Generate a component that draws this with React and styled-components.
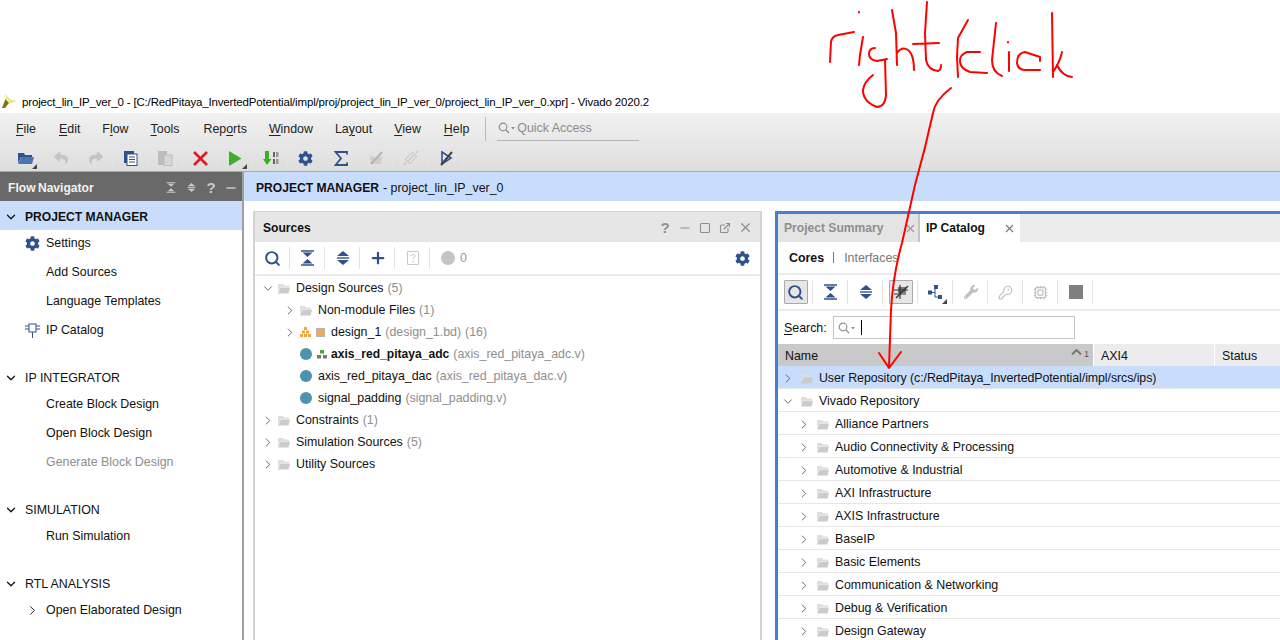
import React from "react";
import styled, { createGlobalStyle } from "styled-components";
import { ChevronRight, ChevronDown, Search, Plus, X, Minus, Square, ExternalLink, KeyRound, Cpu } from "lucide-react";
import { FaCog, FaReply, FaShare, FaWrench } from "react-icons/fa";

const GlobalStyle = createGlobalStyle`
    html, body { margin: 0; padding: 0; background: #fff; }
    body { font-family: "Liberation Sans", Arial, sans-serif; font-size: 12.4px; color: #111; }
    * { box-sizing: border-box; }
    b { font-size: 12.1px; }
`;

const NAVY = "#30528c";

const Page = styled.div`
    position: relative;
    width: 1280px;
    height: 640px;
    overflow: hidden;
    display: flex;
    flex-direction: column;
`;

const BlankTop = styled.div`
    height: 90px;
    flex: none;
`;

const TitleBar = styled.div`
    height: 23px;
    flex: none;
    display: flex;
    align-items: center;
    gap: 5px;
    padding-left: 2px;
    font-size: 11.5px;
    letter-spacing: -0.16px;
    color: #000;
`;

const Chrome = styled.div`
    flex: none;
    height: 59px;
    background: linear-gradient(#f1f1f1, #dedede);
    border-bottom: 1px solid #a9a9a9;
`;

const MenuBar = styled.div`
    height: 32px;
    display: flex;
    align-items: center;
    padding-left: 16px;
`;

const MenuItem = styled.span`
    margin-right: ${(p) => p.$gap}px;
    color: #222;
`;

const Mn = styled.span`
    text-decoration: underline;
    text-underline-offset: 2px;
`;

const MenuDivider = styled.div`
    width: 1px;
    height: 24px;
    background: #bdbdbd;
    margin: 0 11px 0 16px;
`;

const QuickAccess = styled.div`
    width: 142px;
    height: 26px;
    margin-top: -2px;
    display: flex;
    align-items: center;
    gap: 1px;
    padding-left: 1px;
    color: #8b8b8b;
    border-bottom: 1px solid #b5b5b5;
`;

const ToolBar = styled.div`
    height: 26px;
    display: flex;
    align-items: center;
    padding-left: ${(p) => p.$pad ?? 0}px;
`;

const ToolButton = styled.div`
    position: relative;
    width: 35px;
    height: ${(p) => p.$h ?? 24}px;
    flex: none;
    display: flex;
    align-items: center;
    justify-content: center;
    &::after {
        content: "";
        display: ${(p) => (p.$sep ? "block" : "none")};
        position: absolute;
        right: 0;
        top: 1px;
        bottom: 1px;
        width: 1px;
        background: ${(p) => p.$sepColor ?? "#e2e2e2"};
    }
`;

const ActiveBox = styled.div`
    width: 24px;
    height: 24px;
    display: flex;
    align-items: center;
    justify-content: center;
    background: #e6e6e6;
    border: 1px solid #a9a9a9;
    border-radius: 1px;
`;

const Corner = styled.span`
    position: absolute;
    right: 6px;
    bottom: 1px;
    border-left: 5px solid transparent;
    border-bottom: 5px solid #444;
`;

const Main = styled.div`
    flex: 1;
    min-height: 0;
    display: flex;
`;

const Nav = styled.nav`
    width: 244px;
    flex: none;
    border-right: 2px solid #a0a0a0;
    display: flex;
    flex-direction: column;
`;

const NavHeader = styled.div`
    height: 29px;
    flex: none;
    background: #696969;
    color: #f2f2f2;
    display: flex;
    align-items: center;
    padding: 2px 0 0 8px;
`;

const NavHeaderTitle = styled.b`
    flex: 1;
    word-spacing: -1px;
`;

const HeaderCell = styled.div`
    width: 20px;
    display: flex;
    align-items: center;
    justify-content: center;
    color: ${(p) => p.$color};
    font-weight: bold;
    font-size: 15px;
    line-height: 1;
`;

const NavHeaderTools = styled.div`
    display: flex;
    align-items: center;
    padding-right: 1px;
`;

const Sections = styled.div`
    padding-top: 1px;
    display: flex;
    flex-direction: column;
    gap: 21px;
`;

const SectionHead = styled.div`
    height: 28px;
    display: flex;
    align-items: center;
    padding: 2px 0 0 4px;
    gap: 7px;
    background: ${(p) => (p.$active ? "#c8dcfb" : "transparent")};
    box-shadow: ${(p) => (p.$active ? "0 -1px 0 #c8dcfb" : "none")};
`;

const NavItems = styled.div`
    margin-top: 1px;
    display: flex;
    flex-direction: column;
    gap: 5px;
`;

const NavItem = styled.div`
    height: 24px;
    display: flex;
    align-items: center;
    color: ${(p) => (p.$disabled ? "#8d8d8d" : "#111")};
`;

const NavIconSlot = styled.span`
    width: 46px;
    flex: none;
    display: flex;
    justify-content: flex-end;
    padding-right: 6px;
`;

const Content = styled.div`
    flex: 1;
    min-width: 0;
    display: flex;
    flex-direction: column;
`;

const CrumbBar = styled.div`
    height: 29px;
    flex: none;
    background: #c8dcfb;
    display: flex;
    align-items: center;
    gap: 4px;
    padding: 2px 0 0 12px;
`;

const Panels = styled.div`
    flex: 1;
    min-height: 0;
    display: flex;
    gap: 13px;
    padding: 10px 0 0 9px;
`;

const SourcesPanel = styled.section`
    width: 509px;
    flex: none;
    border: 2px solid #d2d2d2;
    border-bottom: 0;
    border-top-width: 1px;
`;

const PanelTitle = styled.div`
    height: 30px;
    background: #e6e6e6;
    display: flex;
    align-items: center;
    padding: 1px 0 0 8px;
`;

const PanelTitleText = styled.b`
    flex: 1;
`;

const PanelTitleTools = styled.div`
    display: flex;
    align-items: center;
    padding-right: 5px;
`;

const PanelBar = styled.div`
    height: ${(p) => p.$h}px;
    flex: none;
    display: flex;
    align-items: center;
    border-bottom: 2px solid #ebebeb;
`;

const Spacer = styled.div`
    flex: 1;
`;

const Count = styled.span`
    color: #9a9a9a;
    margin-left: -5px;
`;

const Tree = styled.div`
    padding: 1px 0 0 6px;
`;

const TreeRow = styled.div`
    height: 22px;
    display: flex;
    align-items: center;
    padding-left: ${(p) => p.$level * 22}px;
    white-space: nowrap;
`;

const Twist = styled.span`
    width: 14px;
    flex: none;
    display: flex;
    align-items: center;
    justify-content: center;
    color: #555;
`;

const RowIcon = styled.span`
    display: flex;
    align-items: center;
    margin: 0 ${(p) => p.$right ?? 6}px 0 ${(p) => p.$left ?? 3}px;
`;

const Dim = styled.span`
    color: #8e8e8e;
    margin-left: 4px;
`;

const BoldName = styled.b`
    margin-left: 4px;
`;

const Dot = styled.span`
    width: 12px;
    height: 12px;
    border-radius: 50%;
    background: #4b93ae;
`;

const OrangeBox = styled.span`
    width: 9px;
    height: 9px;
    background: #f7a94c;
    border: 1px solid #b5b5b5;
    margin-left: 5px;
`;

const CatalogPanel = styled.section`
    flex: 1;
    min-width: 0;
    border-left: 3px solid #4a7dcf;
    border-top: 3px solid #4a7dcf;
    display: flex;
    flex-direction: column;
`;

const TabStrip = styled.div`
    height: 28px;
    flex: none;
    display: flex;
    background: #ececec;
`;

const Tab = styled.div`
    width: ${(p) => p.$w}px;
    display: flex;
    align-items: center;
    justify-content: space-between;
    padding: 0 ${(p) => p.$pr}px 0 6px;
    background: ${(p) => (p.$active ? "#fff" : "#e4e4e4")};
    color: ${(p) => (p.$active ? "#111" : "#8f8f8f")};
    border-right: ${(p) => (p.$active ? "0" : "2px solid #c4c4c4")};
`;

const SubTabs = styled.div`
    height: 33px;
    flex: none;
    display: flex;
    align-items: center;
    padding-left: 11px;
    border-bottom: 2px solid #ebebeb;
`;

const SubTab = styled.span`
    font-weight: ${(p) => (p.$active ? "bold" : "normal")};
    color: ${(p) => (p.$active ? "#111" : "#777")};
`;

const SubTabDivider = styled.span`
    width: 1px;
    height: 11px;
    background: #777;
    margin: 0 10px 0 9px;
`;

const SearchRow = styled.div`
    height: 33px;
    flex: none;
    display: flex;
    align-items: center;
    padding-left: 6px;
    gap: 6px;
`;

const SearchBox = styled.div`
    width: 242px;
    height: 23px;
    border: 1px solid #c4c4c4;
    display: flex;
    align-items: center;
    padding-left: 4px;
`;

const Caret = styled.span`
    width: 1px;
    height: 15px;
    background: #000;
    margin-left: 5px;
`;

const TableHead = styled.div`
    height: 22px;
    flex: none;
    display: flex;
    background: #ececec;
`;

const HeadCell = styled.div`
    width: ${(p) => p.$w}px;
    flex: none;
    display: flex;
    align-items: center;
    justify-content: space-between;
    padding: 2px 4px 0 7px;
    background: ${(p) => (p.$sorted ? "#c9c9c9" : "transparent")};
    border-right: 1px solid #fff;
`;

const SortMark = styled.span`
    display: flex;
    align-items: flex-start;
    gap: 2px;
    font-size: 9px;
    color: #555;
    margin-top: -5px;
`;

const CatalogRow = styled.div`
    height: 23px;
    flex: none;
    display: flex;
    align-items: center;
    padding: 2px 0 0 ${(p) => 3 + p.$level * 16}px;
    border-bottom: 1px solid #e6e6e6;
    background: ${(p) => (p.$selected ? "#c8dcfb" : "#fff")};
    letter-spacing: ${(p) => (p.$selected ? "-0.08px" : "0")};
    white-space: nowrap;
`;

const Annotation = styled.svg`
    position: absolute;
    inset: 0;
    pointer-events: none;
`;

const XilinxLogo = () => (
    <svg width="15" height="15" viewBox="0 0 15 15">
        <path d="M0 14 L3.500 5 L7 9 L3 14Z" fill="#7a7a12" />
        <path d="M3 0 L8.500 5.500 L15 7 L8 9.500 L4 4Z" fill="#e6e68a" />
    </svg>
);

const FolderOpenBlue = () => (
    <svg width="16" height="14" viewBox="0 0 16 14">
        <path d="M0 2h6l1 2h7v2H3L0 12Z" fill={NAVY} />
        <path d="M3 6h13l-2 7H0Z" fill="#4b74b4" />
    </svg>
);

const Folder = () => (
    <svg width="12" height="11" viewBox="0 0 12 11">
        <path d="M0 1h5l1 1.500h5V4H2.500L0 9Z" fill="#dedede" />
        <path d="M2.500 4.500H12L10.500 10.500H0Z" fill="#cbcbcb" />
    </svg>
);

const CollapseAll = ({ color = NAVY, size = 15 }) => (
    <svg width={size} height={size + 1} viewBox="0 0 15 16">
        <path d="M1 1h13M1 15h13" stroke={color} strokeWidth="1.600" />
        <path d="M2.500 2.500h10L7.500 7ZM2.500 13.500h10L7.500 9Z" fill={color} />
    </svg>
);

const ExpandAll = ({ color = NAVY, size = 14 }) => (
    <svg width={size} height={size + 2} viewBox="0 0 14 16">
        <path d="M7 1L13 6H1ZM7 15L1 10H13Z" fill={color} />
        <path d="M1 8h12" stroke={color} strokeWidth="1.400" />
    </svg>
);

const DocList = () => (
    <svg width="14" height="15" viewBox="0 0 14 15">
        <rect x="0" y="0" width="10" height="12" fill={NAVY} />
        <rect x="3" y="3" width="10" height="11.500" fill="#fff" stroke={NAVY} />
        <path d="M5 6h6M5 8.500h6M5 11h6" stroke={NAVY} />
    </svg>
);

const Paste = () => (
    <svg width="15" height="15" viewBox="0 0 15 15">
        <rect x="0" y="0" width="9" height="14" fill="#bdbdbd" />
        <rect x="6" y="4" width="8" height="10.500" fill="#d6d6d6" stroke="#bdbdbd" />
    </svg>
);

const RedCross = () => (
    <svg width="15" height="15" viewBox="0 0 15 15">
        <path d="M1 1L14 14M14 1L1 14" stroke="#e8161c" strokeWidth="2.600" />
    </svg>
);

const Play = () => (
    <svg width="13" height="15" viewBox="0 0 13 15">
        <path d="M0 0L12.500 7.500L0 15Z" fill="#3fae2a" />
    </svg>
);

const Bitstream = () => (
    <svg width="16" height="15" viewBox="0 0 16 15">
        <path d="M2 0h4v8h2.500L4 14 0 8h2Z" fill="#3fae2a" />
        <rect x="10" y="1" width="2" height="5" fill="#666" />
        <rect x="13" y="1" width="2.500" height="5" fill="#999" />
        <rect x="10" y="8" width="2" height="5" fill="#666" />
        <rect x="13" y="8" width="2.500" height="5" fill="#999" />
    </svg>
);

const Sigma = () => (
    <svg width="14" height="15" viewBox="0 0 14 15">
        <path d="M13 3.500V1H1.500L7 7.500 1.500 14H13v-2.500" fill="none" stroke={NAVY} strokeWidth="1.800" />
    </svg>
);

const StruckGray = () => (
    <svg width="16" height="16" viewBox="0 0 16 16">
        <path d="M2 5L8 8 14 6 13 14H3Z" fill="#cdcdcd" />
        <path d="M3 14L14 2" stroke="#b4b4b4" strokeWidth="2" />
    </svg>
);

const StrikeCapsule = () => (
    <svg width="16" height="16" viewBox="0 0 16 16">
        <rect x="3" y="5" width="10" height="6" transform="rotate(-45 8 8)" fill="#e6e6e6" stroke="#c4c4c4" />
        <path d="M1 15l2-2M13 3l2-2M5 11l6-6" stroke="#c4c4c4" strokeWidth="1.400" />
    </svg>
);

const StruckPlay = () => (
    <svg width="16" height="16" viewBox="0 0 16 16">
        <path d="M4 2L13 8 4 14Z" fill="#e8edf5" stroke={NAVY} strokeWidth="1.600" />
        <path d="M3 15L14 2" stroke="#444" strokeWidth="2" />
    </svg>
);

const FilterChip = () => (
    <svg width="16" height="16" viewBox="0 0 16 16">
        <path d="M5 3h8v6H5Z" fill="#777" />
        <path d="M1 6h14M1 10h12M7 1v14" stroke="#333" strokeWidth="1.200" />
        <path d="M3 14L15 2" stroke="#333" strokeWidth="1.400" />
    </svg>
);

const Hierarchy = () => (
    <svg width="15" height="15" viewBox="0 0 15 15">
        <path d="M4 7.500h3M7 3v9h3" fill="none" stroke={NAVY} />
        <rect x="0" y="5.500" width="4" height="4" fill={NAVY} />
        <rect x="6" y="0" width="4" height="4" fill={NAVY} />
        <rect x="10" y="10" width="4" height="4" fill={NAVY} />
    </svg>
);

const OrangeTree = () => (
    <svg width="11" height="10" viewBox="0 0 11 10">
        <path d="M4 0h3v3H4ZM2 3.500h3v3H2ZM6 3.500h3v3H6ZM0 7h3v3H0ZM4 7h3v3H4ZM8 7h3v3H8Z" fill="#f3a23c" />
    </svg>
);

const ModuleMark = () => (
    <svg width="10" height="9" viewBox="0 0 10 9">
        <rect x="3" y="0" width="4" height="3.500" fill="#3fae2a" />
        <rect x="0" y="5" width="4" height="3.500" fill="#777" />
        <rect x="6" y="5" width="4" height="3.500" fill="#777" />
    </svg>
);

const IpPlug = () => (
    <svg width="15" height="16" viewBox="0 0 15 16">
        <rect x="4" y="2" width="7" height="8" fill="#fff" stroke={NAVY} />
        <path d="M0 4h4M0 7h4M11 4h4M11 7h4M7.500 10v6" stroke={NAVY} />
    </svg>
);

const GrayDot = () => (
    <svg width="14" height="14" viewBox="0 0 14 14">
        <circle cx="7" cy="7" r="7" fill="#c4c4c4" />
    </svg>
);

const DocQuestion = () => (
    <svg width="12" height="14" viewBox="0 0 12 14">
        <path d="M.5.500h11v13H.5Z" fill="#fff" stroke="#c8c8c8" />
        <path d="M4 5c0-2 4-2 4 0 0 1.500-2 1.500-2 3.500M6 10v1.500" fill="none" stroke="#c0c0c0" />
    </svg>
);

const InfoBox = () => (
    <svg width="14" height="14" viewBox="0 0 14 14">
        <rect width="14" height="14" fill="#7f7f7f" />
    </svg>
);

const SmallSearch = () => (
    <svg width="18" height="12" viewBox="0 0 18 12">
        <circle cx="5" cy="5" r="3.800" fill="none" stroke="#8f8f8f" strokeWidth="1.200" />
        <path d="M8 8l3 3" stroke="#8f8f8f" strokeWidth="1.400" />
        <path d="M13 5h4l-2 2.500Z" fill="#8f8f8f" />
    </svg>
);

const Chevron = ({ open, size = 15 }) =>
    open ? <ChevronDown size={size} strokeWidth={1.5} /> : <ChevronRight size={size} strokeWidth={1.5} />;

const MENUS = [
    [<><Mn>F</Mn>ile</>, 23],
    [<><Mn>E</Mn>dit</>, 22],
    [<>F<Mn>l</Mn>ow</>, 22],
    [<><Mn>T</Mn>ools</>, 24],
    [<>Rep<Mn>o</Mn>rts</>, 22],
    [<><Mn>W</Mn>indow</>, 22],
    [<>La<Mn>y</Mn>out</>, 22],
    [<><Mn>V</Mn>iew</>, 23],
    [<><Mn>H</Mn>elp</>, 0],
];

const CATALOG = [
    "Alliance Partners",
    "Audio Connectivity & Processing",
    "Automotive & Industrial",
    "AXI Infrastructure",
    "AXIS Infrastructure",
    "BaseIP",
    "Basic Elements",
    "Communication & Networking",
    "Debug & Verification",
    "Design Gateway",
];

const NavSection = ({ title, active, items }) => (
    <div>
        <SectionHead $active={active}>
            <ChevronDown size={14} strokeWidth={2.2} />
            {active ? <b>{title}</b> : <span>{title}</span>}
        </SectionHead>
        <NavItems>
            {items.map((item) => (
                <NavItem key={item.label} $disabled={item.disabled}>
                    <NavIconSlot>{item.icon}</NavIconSlot>
                    {item.label}
                </NavItem>
            ))}
        </NavItems>
    </div>
);

const MainToolbar = () => (
    <ToolBar $pad={8}>
        <ToolButton $sep $sepColor="#e4e4e4"><FolderOpenBlue /><Corner /></ToolButton>
        <ToolButton $sep $sepColor="#e4e4e4"><FaReply size={14} color="#c4c4c4" /></ToolButton>
        <ToolButton $sep $sepColor="#e4e4e4"><FaShare size={14} color="#c4c4c4" /></ToolButton>
        <ToolButton $sep $sepColor="#e4e4e4"><DocList /></ToolButton>
        <ToolButton $sep $sepColor="#e4e4e4"><Paste /></ToolButton>
        <ToolButton $sep $sepColor="#e4e4e4"><RedCross /></ToolButton>
        <ToolButton $sep $sepColor="#e4e4e4"><Play /><Corner /></ToolButton>
        <ToolButton $sep $sepColor="#e4e4e4"><Bitstream /></ToolButton>
        <ToolButton $sep $sepColor="#e4e4e4"><FaCog size={15} color={NAVY} /></ToolButton>
        <ToolButton $sep $sepColor="#e4e4e4"><Sigma /></ToolButton>
        <ToolButton $sep $sepColor="#e4e4e4"><StruckGray /></ToolButton>
        <ToolButton $sep $sepColor="#e4e4e4"><StrikeCapsule /></ToolButton>
        <ToolButton $sep $sepColor="#e4e4e4"><StruckPlay /></ToolButton>
    </ToolBar>
);

const SourcesTree = () => (
    <Tree>
        <TreeRow $level={0}><Twist><Chevron open /></Twist><RowIcon><Folder /></RowIcon>Design Sources<Dim>(5)</Dim></TreeRow>
        <TreeRow $level={1}><Twist><Chevron /></Twist><RowIcon><Folder /></RowIcon>Non-module Files<Dim>(1)</Dim></TreeRow>
        <TreeRow $level={1}><Twist><Chevron /></Twist><RowIcon $right={6}><OrangeTree /><OrangeBox /></RowIcon>design_1<Dim>(design_1.bd)</Dim><Dim>(16)</Dim></TreeRow>
        <TreeRow $level={1}><Twist /><RowIcon $right={5}><Dot /></RowIcon><ModuleMark /><BoldName>axis_red_pitaya_adc</BoldName><Dim>(axis_red_pitaya_adc.v)</Dim></TreeRow>
        <TreeRow $level={1}><Twist /><RowIcon><Dot /></RowIcon>axis_red_pitaya_dac<Dim>(axis_red_pitaya_dac.v)</Dim></TreeRow>
        <TreeRow $level={1}><Twist /><RowIcon><Dot /></RowIcon>signal_padding<Dim>(signal_padding.v)</Dim></TreeRow>
        <TreeRow $level={0}><Twist><Chevron /></Twist><RowIcon><Folder /></RowIcon>Constraints<Dim>(1)</Dim></TreeRow>
        <TreeRow $level={0}><Twist><Chevron /></Twist><RowIcon><Folder /></RowIcon>Simulation Sources<Dim>(5)</Dim></TreeRow>
        <TreeRow $level={0}><Twist><Chevron /></Twist><RowIcon><Folder /></RowIcon>Utility Sources</TreeRow>
    </Tree>
);

const App = () => (
    <Page>
        <GlobalStyle />
        <BlankTop />
        <TitleBar>
            <XilinxLogo />
            project_lin_IP_ver_0 - [C:/RedPitaya_InvertedPotential/impl/proj/project_lin_IP_ver_0/project_lin_IP_ver_0.xpr] - Vivado 2020.2
        </TitleBar>
        <Chrome>
            <MenuBar>
                {MENUS.map(([label, gap], i) => (
                    <MenuItem key={i} $gap={gap}>{label}</MenuItem>
                ))}
                <MenuDivider />
                <QuickAccess><SmallSearch />Quick Access</QuickAccess>
            </MenuBar>
            <MainToolbar />
        </Chrome>
        <Main>
            <Nav>
                <NavHeader>
                    <NavHeaderTitle>Flow Navigator</NavHeaderTitle>
                    <NavHeaderTools>
                        <HeaderCell $color="#c9c9c9"><CollapseAll color="#c9c9c9" size={10} /></HeaderCell>
                        <HeaderCell $color="#c9c9c9"><ExpandAll color="#c9c9c9" size={9} /></HeaderCell>
                        <HeaderCell $color="#c9c9c9">?</HeaderCell>
                        <HeaderCell $color="#c9c9c9"><Minus size={14} strokeWidth={2.4} /></HeaderCell>
                    </NavHeaderTools>
                </NavHeader>
                <Sections>
                    <NavSection
                        title="PROJECT MANAGER"
                        active
                        items={[
                            { label: "Settings", icon: <FaCog size={15} color={NAVY} /> },
                            { label: "Add Sources" },
                            { label: "Language Templates" },
                            { label: "IP Catalog", icon: <IpPlug /> },
                        ]}
                    />
                    <NavSection
                        title="IP INTEGRATOR"
                        items={[
                            { label: "Create Block Design" },
                            { label: "Open Block Design" },
                            { label: "Generate Block Design", disabled: true },
                        ]}
                    />
                    <NavSection title="SIMULATION" items={[{ label: "Run Simulation" }]} />
                    <NavSection
                        title="RTL ANALYSIS"
                        items={[{ label: "Open Elaborated Design", icon: <Chevron /> }]}
                    />
                </Sections>
            </Nav>
            <Content>
                <CrumbBar>
                    <b>PROJECT MANAGER</b> - project_lin_IP_ver_0
                </CrumbBar>
                <Panels>
                    <SourcesPanel>
                        <PanelTitle>
                            <PanelTitleText>Sources</PanelTitleText>
                            <PanelTitleTools>
                                <HeaderCell $color="#8f8f8f">?</HeaderCell>
                                <HeaderCell $color="#8f8f8f"><Minus size={14} strokeWidth={2} /></HeaderCell>
                                <HeaderCell $color="#8f8f8f"><Square size={12} strokeWidth={2.2} /></HeaderCell>
                                <HeaderCell $color="#8f8f8f"><ExternalLink size={12} strokeWidth={2.2} /></HeaderCell>
                                <HeaderCell $color="#8f8f8f"><X size={15} strokeWidth={2} /></HeaderCell>
                            </PanelTitleTools>
                        </PanelTitle>
                        <PanelBar $h={34}>
                            <ToolButton $sep><Search size={17} strokeWidth={2.8} color={NAVY} /></ToolButton>
                            <ToolButton $sep><CollapseAll /></ToolButton>
                            <ToolButton $sep><ExpandAll /></ToolButton>
                            <ToolButton $sep><Plus size={18} strokeWidth={3} color={NAVY} /></ToolButton>
                            <ToolButton $sep><DocQuestion /></ToolButton>
                            <ToolButton><GrayDot /></ToolButton>
                            <Count>0</Count>
                            <Spacer />
                            <ToolButton><FaCog size={15} color={NAVY} /></ToolButton>
                        </PanelBar>
                        <SourcesTree />
                    </SourcesPanel>
                    <CatalogPanel>
                        <TabStrip>
                            <Tab $w={142} $pr={1}><b>Project Summary</b><X size={13} color="#999" /></Tab>
                            <Tab $w={100} $pr={4} $active><b>IP Catalog</b><X size={13} color="#777" /></Tab>
                        </TabStrip>
                        <SubTabs>
                            <SubTab $active>Cores</SubTab>
                            <SubTabDivider />
                            <SubTab>Interfaces</SubTab>
                        </SubTabs>
                        <PanelBar $h={36}>
                            <ToolButton $h={26} $sep><ActiveBox><Search size={17} strokeWidth={2.8} color={NAVY} /></ActiveBox></ToolButton>
                            <ToolButton $h={26} $sep><CollapseAll /></ToolButton>
                            <ToolButton $h={26} $sep><ExpandAll /></ToolButton>
                            <ToolButton $h={26} $sep><ActiveBox><FilterChip /></ActiveBox></ToolButton>
                            <ToolButton $h={26} $sep><Hierarchy /><Corner /></ToolButton>
                            <ToolButton $h={26} $sep><FaWrench size={14} color="#c0c0c0" /></ToolButton>
                            <ToolButton $h={26} $sep><KeyRound size={15} color="#c4c4c4" /></ToolButton>
                            <ToolButton $h={26} $sep><Cpu size={15} color="#c0c0c0" /></ToolButton>
                            <ToolButton $h={26} $sep><InfoBox /></ToolButton>
                        </PanelBar>
                        <SearchRow>
                            <span><Mn>S</Mn>earch:</span>
                            <SearchBox><SmallSearch /><Caret /></SearchBox>
                        </SearchRow>
                        <TableHead>
                            <HeadCell $w={316} $sorted>
                                Name
                                <SortMark><svg width="11" height="6" viewBox="0 0 11 6"><path d="M1 5.500L5.500 1 10 5.500" fill="none" stroke="#777" strokeWidth="2" /></svg>1</SortMark>
                            </HeadCell>
                            <HeadCell $w={121}>AXI4</HeadCell>
                            <HeadCell $w={100}>Status</HeadCell>
                        </TableHead>
                        <CatalogRow $level={0} $selected>
                            <Twist><Chevron /></Twist>
                            <RowIcon $left={6}><Folder /></RowIcon>
                            User Repository (c:/RedPitaya_InvertedPotential/impl/srcs/ips)
                        </CatalogRow>
                        <CatalogRow $level={0}>
                            <Twist><Chevron open /></Twist>
                            <RowIcon $left={6}><Folder /></RowIcon>
                            Vivado Repository
                        </CatalogRow>
                        {CATALOG.map((name) => (
                            <CatalogRow key={name} $level={1}>
                                <Twist><Chevron /></Twist>
                                <RowIcon $left={6}><Folder /></RowIcon>
                                {name}
                            </CatalogRow>
                        ))}
                    </CatalogPanel>
                </Panels>
            </Content>
        </Main>
        <Annotation width="1280" height="640" viewBox="0 0 1280 640" fill="none" stroke="#f00" strokeWidth="2" strokeLinecap="round" strokeLinejoin="round">
            <path d="M830 62L831 42Q832 36 838 35L854 32" />
            <path d="M859 12v.5M859 65L860 55 863 37" />
            <path d="M887 59L877 61Q869 60 869 54T875 48" />
            <path d="M885 60L886 95Q885 107 877 107 863 102 863 90 864 82 873 75" />
            <path d="M892 10L896 33 897 65M897 53Q902 46 908 50 914 54 914 70" />
            <path d="M927 2L925 33 926 60Q928 70 938 71 941 70 941 65M913 44L939 43" />
            <path d="M968 20L958 38 957 57 958 77" />
            <path d="M980 52L967 52Q959 55 960 62T970 72L987 73" />
            <path d="M996 23L992 60Q992 72 1002 76" />
            <path d="M1008 42v.5M1009 52V71" />
            <path d="M1040 61V57L1025 52Q1017 53 1017 63 1018 70 1025 70H1040" />
            <path d="M1052 13L1053 77M1062 52Q1060 62 1053 72M1057 65Q1062 76 1072 77" />
            <path d="M951 88Q935 100 933 113 925 150 915 185L902 243Q893 275 891 310L889 367" />
            <path d="M879 353L889 368 901 352" />
        </Annotation>
    </Page>
);

export default App;
